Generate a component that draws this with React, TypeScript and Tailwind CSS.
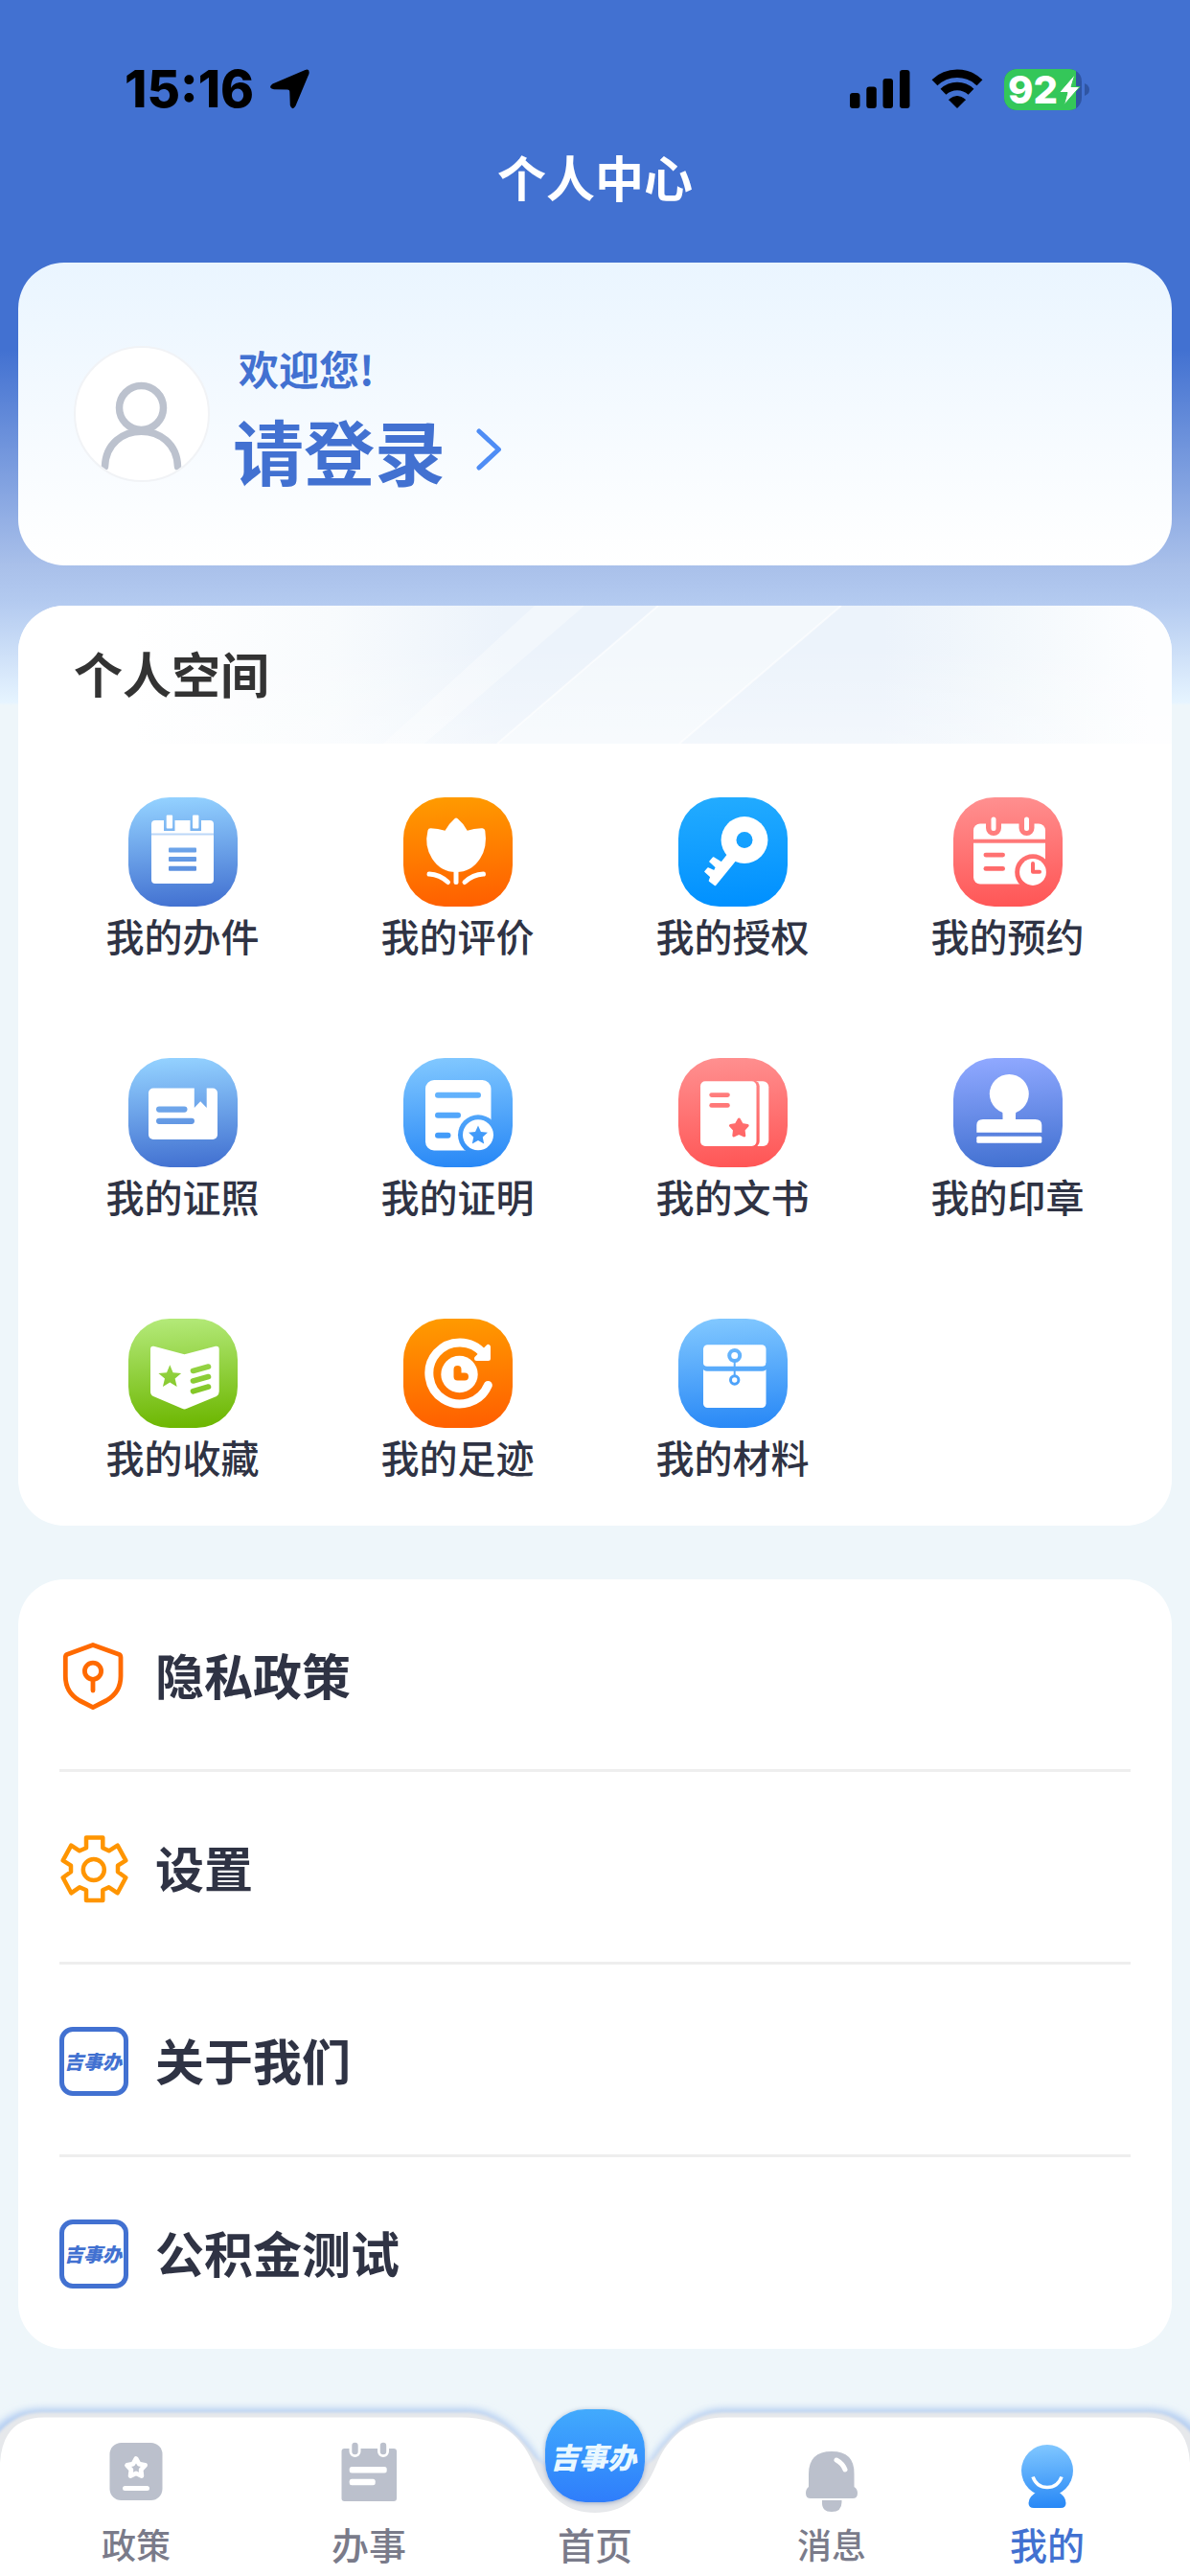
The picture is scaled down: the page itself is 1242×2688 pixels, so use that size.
import type { ReactNode } from "react";

function starPath(cx: number, cy: number, outer: number, inner: number) {
  const points: string[] = [];
  for (let i = 0; i < 10; i++) {
    const r = i % 2 === 0 ? outer : inner;
    const a = -Math.PI / 2 + (i * Math.PI) / 5;
    points.push(`${(cx + r * Math.cos(a)).toFixed(2)} ${(cy + r * Math.sin(a)).toFixed(2)}`);
  }
  return `M${points.join("L")}Z`;
}

type Service = {
  id: string;
  label: string;
  from: string;
  to: string;
  draw: (bg: string) => ReactNode;
};

const services: Service[] = [
  {
    id: "cases",
    label: "我的办件",
    from: "#93d1ff",
    to: "#4271d1",
    draw: (bg) => (
      <>
        <rect x="24" y="24" width="65" height="66" rx="4" fill="#fff" />
        <rect x="24" y="37.5" width="65" height="2" fill="#bcd7f8" />
        <rect x="37" y="22" width="11.5" height="13" fill={bg} />
        <rect x="64.5" y="22" width="11.5" height="13" fill={bg} />
        <rect x="39.7" y="18.5" width="6.4" height="14" rx="1" fill="#fff" />
        <rect x="67" y="18.5" width="6.4" height="14" rx="1" fill="#fff" />
        <rect x="42" y="52.5" width="29" height="5" rx="1" fill={bg} />
        <rect x="42" y="62" width="29" height="5" rx="1" fill={bg} />
        <rect x="42" y="71.7" width="29" height="5" rx="1" fill={bg} />
      </>
    ),
  },
  {
    id: "reviews",
    label: "我的评价",
    from: "#ff9a00",
    to: "#ff5f00",
    draw: () => (
      <>
        <path
          d="M53.5 22.3Q55 20.8 56.7 22.3Q63 27.5 66.7 34.8Q74 32 82.5 32.2Q84.8 32.3 85.3 34.8Q88 52 80 64Q71 78 55 78Q39 78 30 64Q21.500 51 25.500 34.500Q26 32.200 28.500 32.200Q36 32.200 43.500 34.800Q47.500 27.500 53.500 22.300Z"
          fill="#fff"
        />
        <path d="M55 76V88.500" stroke="#fff" strokeWidth="5" strokeLinecap="round" />
        <path d="M27 80Q38 80.500 46.500 88.500M83.500 80Q72.500 80.500 64 88.500" fill="none" stroke="#fff" strokeWidth="5" strokeLinecap="round" />
      </>
    ),
  },
  {
    id: "authorizations",
    label: "我的授权",
    from: "#22abff",
    to: "#0090ff",
    draw: (bg) => (
      <>
        <circle cx="69" cy="44.500" r="24.400" fill="#fff" />
        <circle cx="69" cy="44.500" r="8.500" fill={bg} />
        <path
          d="M51.500 60L45 68.200L36.500 63L33 67L39.500 73L37.500 77L31 74L28 77.500L34 83L32.500 87L38.500 91.500L60 65Z"
          fill="#fff"
          stroke="#fff"
          strokeWidth="1.600"
          strokeLinejoin="round"
        />
      </>
    ),
  },
  {
    id: "bookings",
    label: "我的预约",
    from: "#ff8f8f",
    to: "#ff5656",
    draw: (bg) => (
      <>
        <rect x="21" y="27.500" width="75" height="63" rx="7" fill="#fff" />
        <path d="M42 24V32M76.500 24V32" stroke={bg} strokeWidth="16" strokeLinecap="round" />
        <path d="M42 23V32.500M76.500 23V32.500" stroke="#fff" strokeWidth="5" strokeLinecap="round" />
        <rect x="20" y="43.700" width="77" height="4" fill={bg} />
        <rect x="31.500" y="57.700" width="22.500" height="4.800" rx="2.400" fill={bg} />
        <rect x="31.500" y="72" width="22.500" height="4.800" rx="2.400" fill={bg} />
        <circle cx="83" cy="78" r="18.800" fill={bg} />
        <circle cx="83" cy="78" r="13.900" fill="#fff" />
        <path d="M83 69V77.700H90" fill="none" stroke={bg} strokeWidth="4" strokeLinecap="round" strokeLinejoin="round" />
      </>
    ),
  },
  {
    id: "licences",
    label: "我的证照",
    from: "#93d1ff",
    to: "#4271d1",
    draw: (bg) => (
      <>
        <rect x="21" y="31.500" width="72" height="53.500" rx="5" fill="#fff" />
        <path d="M68.800 31H81.700V52L75.200 45.200L68.800 52Z" fill={bg} />
        <rect x="29" y="50.500" width="32.500" height="6.200" rx="3.100" fill={bg} />
        <rect x="29" y="62.700" width="40" height="6.200" rx="3.100" fill={bg} />
      </>
    ),
  },
  {
    id: "certificates",
    label: "我的证明",
    from: "#80c7ff",
    to: "#2888f6",
    draw: (bg) => (
      <>
        <rect x="23" y="23" width="68.500" height="73.500" rx="9" fill="#fff" />
        <rect x="33" y="35.700" width="48" height="6" rx="3" fill={bg} />
        <rect x="33" y="56.700" width="27" height="6" rx="3" fill={bg} />
        <rect x="33" y="77.700" width="16.500" height="6" rx="3" fill={bg} />
        <circle cx="78" cy="80.300" r="21" fill={bg} />
        <circle cx="78" cy="80.300" r="16" fill="#fff" />
        <path d={starPath(78, 81, 10.5, 5)} fill={bg} />
      </>
    ),
  },
  {
    id: "documents",
    label: "我的文书",
    from: "#ff8f8f",
    to: "#ff5656",
    draw: (bg) => (
      <>
        <rect x="60" y="24.300" width="34.300" height="67.700" rx="6" fill="#fff" />
        <rect x="30" y="23.500" width="54.700" height="69.500" rx="6" fill={bg} />
        <rect x="23" y="24.300" width="58.500" height="67.700" rx="5" fill="#fff" />
        <rect x="32.300" y="36.200" width="21.500" height="4.800" rx="2.400" fill={bg} />
        <rect x="32.300" y="47" width="21.500" height="4.800" rx="2.400" fill={bg} />
        <path d={starPath(63.3, 73.4, 9.3, 5)} fill={bg} stroke={bg} strokeWidth="3" strokeLinejoin="round" />
      </>
    ),
  },
  {
    id: "seals",
    label: "我的印章",
    from: "#8fa8ff",
    to: "#4271d1",
    draw: () => (
      <>
        <circle cx="58.300" cy="37.500" r="20.500" fill="#fff" />
        <path d="M50 54Q51.500 56 51.500 60V64.300H65V60Q65 56 67 54Z" fill="#fff" />
        <path d="M24.300 77.700V70Q24.300 64 31 64H85.500Q92.300 64 92.300 70V77.700Z" fill="#fff" />
        <rect x="24.300" y="81.700" width="68" height="7" rx="1.500" fill="#fff" />
      </>
    ),
  },
  {
    id: "favorites",
    label: "我的收藏",
    from: "#b3e978",
    to: "#6cb600",
    draw: (bg) => (
      <>
        <path
          d="M26.500 28.800L58.500 37.300L91 28.800Q94.700 28.300 94.700 32V76Q94.700 79.500 92 81L61 93.800Q58.500 95 56 93.800L26 81Q23 79.500 23 76V32Q23 28.300 26.500 28.800Z"
          fill="#fff"
        />
        <path d={starPath(43.3, 60.8, 12.5, 5.6)} fill={bg} />
        <path d="M67.500 54.500L83.500 50M67.500 65L83.500 60.500M67.500 75.800L83.500 71" stroke={bg} strokeWidth="5.600" strokeLinecap="round" />
      </>
    ),
  },
  {
    id: "history",
    label: "我的足迹",
    from: "#ff9a00",
    to: "#ff5f00",
    draw: (bg) => (
      <>
        <path d="M83.500 36.500A32 32 0 1 0 88.300 69.500" fill="none" stroke="#fff" strokeWidth="9" strokeLinecap="round" />
        <path d="M88.500 29.500V41.500H76.500Z" fill="#fff" stroke="#fff" strokeWidth="5" strokeLinejoin="round" />
        <circle cx="58.500" cy="58" r="19.200" fill="#fff" />
        <path d="M56.500 53V60.500H64" fill="none" stroke={bg} strokeWidth="8" strokeLinecap="round" strokeLinejoin="round" />
      </>
    ),
  },
  {
    id: "materials",
    label: "我的材料",
    from: "#80c7ff",
    to: "#2888f6",
    draw: (bg) => (
      <>
        <rect x="26" y="27.300" width="65.500" height="65.700" rx="4.500" fill="#fff" />
        <path d="M26 46Q26 49.800 30 49.800H87.500Q91.500 49.800 91.500 46H93V51Q91.500 54.800 87.500 54.800H30Q26 54.800 25 51V46Z" fill={bg} />
        <circle cx="58.700" cy="38.500" r="5.500" fill="none" stroke={bg} strokeWidth="4" />
        <path d="M58.700 44V60" stroke={bg} strokeWidth="2" />
        <circle cx="58.700" cy="64" r="4.200" fill="none" stroke={bg} strokeWidth="3" />
      </>
    ),
  },
];

function ServiceIcon({ service }: { service: Service }) {
  const id = `tile-${service.id}`;
  return (
    <svg viewBox="0 0 114 114" className="size-[114px]" aria-hidden="true">
      <defs>
        <linearGradient id={id} gradientUnits="userSpaceOnUse" x1="53" y1="0" x2="61" y2="114">
          <stop offset="0" stopColor={service.from} />
          <stop offset="1" stopColor={service.to} />
        </linearGradient>
      </defs>
      <rect width="114" height="114" rx="43" fill={`url(#${id})`} />
      {service.draw(`url(#${id})`)}
    </svg>
  );
}

function ShieldIcon() {
  return (
    <svg viewBox="0 0 72 72" className="size-[72px]" fill="none" stroke="#ff6a00" strokeWidth="4.800" strokeLinecap="round" strokeLinejoin="round" aria-hidden="true">
      <path d="M35 3.500L62 13.200Q64 14 64 16.500V36Q64 53 49 61.500L35 68.700L21 61.500Q6.300 53 6.300 36V16.500Q6.300 14 8.300 13.200Z" />
      <circle cx="35" cy="30.700" r="8.600" />
      <path d="M35 40V51" />
    </svg>
  );
}

function GearIcon() {
  return (
    <svg viewBox="0 0 72 72" className="size-[72px]" fill="none" stroke="#ff9500" strokeWidth="4.500" strokeLinejoin="round" aria-hidden="true">
      <path d="M28 3.500H45.300V14.300L51.700 17.300L60.700 11.700L69.300 27.300L61 32.700V39.300L69.300 45.300L60.700 61.300L51.700 55.300L45.300 58.300V69H28V58.300L21 55.300L12.300 61.300L3.700 45.300L12 39.300V32.700L3.700 27.300L12.300 11.700L21 17.300L28 14.300Z" />
      <circle cx="35.800" cy="37" r="11" />
    </svg>
  );
}

function BrandBadge() {
  return (
    <span className="flex size-[72px] items-center justify-center rounded-[14px] border-[5px] border-[#4271d1] pr-0.5 text-[20px] leading-none font-black text-[#4271d1] italic">
      吉事办
    </span>
  );
}

const menu = [
  { label: "隐私政策", icon: <ShieldIcon /> },
  { label: "设置", icon: <GearIcon /> },
  { label: "关于我们", icon: <BrandBadge /> },
  { label: "公积金测试", icon: <BrandBadge /> },
];

function StatusBar() {
  return (
    <div className="flex items-center justify-between pt-[66px] pr-[104px] pl-[130px]">
      <div className="flex h-[54px] items-center gap-4">
        <span className="font-[Inter] text-[53px] leading-[54px] font-extrabold text-black">15:16</span>
        <svg viewBox="0 0 42 42" className="size-[42px]" aria-hidden="true">
          <path d="M37.500 1Q42.500 -1 41.500 5L27.500 38.500Q24 44 21.800 38L21.300 23.500Q21.300 21.500 19 21.500L5 21.300Q-2 20 3.500 15.500Z" fill="#000" />
        </svg>
      </div>
      <div className="flex h-[54px] items-center gap-[21px]">
        <svg viewBox="0 0 63 42" className="h-[42px] w-[63px]" aria-hidden="true">
          <rect x="0" y="25" width="10.500" height="16" rx="3" />
          <rect x="17.300" y="18.500" width="10.500" height="22.500" rx="3" />
          <rect x="34.500" y="10" width="10.500" height="31" rx="3" />
          <rect x="52" y="1" width="10.500" height="40" rx="3" />
        </svg>
        <svg viewBox="0 0 56 42" className="h-[42px] w-[56px]" aria-hidden="true">
          <path d="M4.500 14.300A34 34 0 0 1 51.500 14.300" fill="none" stroke="#000" strokeWidth="8.500" />
          <path d="M13.500 23.800A21 21 0 0 1 42.500 23.800" fill="none" stroke="#000" strokeWidth="8.500" />
          <path d="M28 40.500L19.500 32Q28 25 36.500 32Z" stroke="#000" strokeLinejoin="round" />
        </svg>
        <svg viewBox="0 0 90 43" className="h-[43px] w-[90px] overflow-visible" role="img" aria-label="电量 92%，充电中">
          <defs>
            <clipPath id="battery-body">
              <rect width="81" height="43" rx="13" />
            </clipPath>
          </defs>
          <g clipPath="url(#battery-body)">
            <rect width="81" height="43" fill="#2f55a3" />
            <rect width="75" height="43" fill="#34c759" />
          </g>
          <path d="M84 15Q89 17 89 21.500T84 28Z" fill="#2f55a3" />
          <text x="4" y="36" fontFamily="Inter" fontSize="40" fontWeight="800" fill="#fff">
            92
          </text>
          <path d="M74 5.500L57.500 24.500H66L62.500 37.500L79 18.500H70Z" fill="#fff" stroke="#34c759" strokeWidth="1" />
        </svg>
      </div>
    </div>
  );
}

function ProfileCard() {
  return (
    <section className="flex h-[316px] items-start rounded-[48px] bg-linear-to-b from-[#eaf5ff] to-white pt-[83px] pl-[58px]">
      <span className="mt-1 flex size-[142px] shrink-0 items-center justify-center overflow-hidden rounded-full border-2 border-[#f1f3f6] bg-white">
        <svg viewBox="0 0 138 138" className="size-[138px]" fill="none" stroke="#bcc2ce" strokeWidth="7.500" strokeLinecap="round" aria-hidden="true">
          <circle cx="68.500" cy="62.500" r="23" />
          <path d="M30.500 124C32 75 105 75 106.500 124" />
        </svg>
      </span>
      <div className="ml-6 flex flex-col text-[#4271d1]">
        <p className="ml-1.5 text-[42px] leading-[54px] font-bold">欢迎您!</p>
        <a href="#login" className="mt-2 flex items-center gap-8">
          <span className="text-[74px] leading-[100px] font-bold">请登录</span>
          <svg viewBox="0 0 28 46" className="h-[46px] w-[28px]" fill="none" stroke="#4f8df5" strokeWidth="5" strokeLinecap="round" strokeLinejoin="round" aria-hidden="true">
            <path d="M3 4L23.500 23L3 42" />
          </svg>
        </a>
      </div>
    </section>
  );
}

function SpaceBanner() {
  return (
    <svg viewBox="0 0 1204 144" preserveAspectRatio="none" className="absolute inset-0 h-full w-full" aria-hidden="true">
      <defs>
        <linearGradient id="banner-base" x1="0" y1="0" x2="1" y2="0">
          <stop offset="0.100" stopColor="#ffffff" />
          <stop offset="0.270" stopColor="#f8fbfd" />
          <stop offset="0.420" stopColor="#ecf3fb" />
          <stop offset="0.750" stopColor="#ecf3fb" />
          <stop offset="0.860" stopColor="#f3f8fc" />
          <stop offset="0.980" stopColor="#fdfeff" />
        </linearGradient>
        <linearGradient id="banner-fade" x1="0" y1="0" x2="0" y2="1">
          <stop offset="0.300" stopColor="#ffffff" stopOpacity="0" />
          <stop offset="1" stopColor="#ffffff" stopOpacity="0.350" />
        </linearGradient>
      </defs>
      <rect width="1204" height="144" fill="url(#banner-base)" />
      <path d="M539 0H591L424 144H381Z" fill="#fff" fillOpacity="0.350" />
      <path d="M668 0H859L690 144H500Z" fill="#fff" fillOpacity="0.400" />
      <path d="M668 0L500 144M859 0L690 144" stroke="#fff" strokeOpacity="0.600" strokeWidth="2" />
      <rect width="1204" height="144" fill="url(#banner-fade)" />
    </svg>
  );
}

function PersonalSpace() {
  return (
    <section className="mt-[42px] overflow-hidden rounded-[48px] bg-white pb-11">
      <div className="relative h-[144px]">
        <SpaceBanner />
        <h2 className="relative pt-[34px] pl-[58px] text-[51px] leading-[72px] font-bold text-[#333333]">个人空间</h2>
      </div>
      <ul className="grid grid-cols-4 gap-y-[100px] px-7 pt-14">
        {services.map((service) => (
          <li key={service.id}>
            <a href={`#${service.id}`} className="flex flex-col items-center gap-0.5">
              <ServiceIcon service={service} />
              <span className="text-[40px] leading-[56px] font-medium text-[#2f3344]">{service.label}</span>
            </a>
          </li>
        ))}
      </ul>
    </section>
  );
}

function MenuList() {
  return (
    <ul className="mt-14 rounded-[48px] bg-white px-[43px] pb-0.5">
      {menu.map((item) => (
        <li key={item.label} className="border-b-3 border-[#eeeeee] last:border-b-0">
          <a href={`#${item.label}`} className="flex h-[198px] items-center gap-7 pt-1">
            {item.icon}
            <span className="pb-1 text-[51px] leading-[72px] font-bold text-[#2f3344]">{item.label}</span>
          </a>
        </li>
      ))}
    </ul>
  );
}

function PolicyTabIcon() {
  return (
    <svg viewBox="0 0 72 76" className="h-[76px] w-[72px]" aria-hidden="true">
      <rect x="8.500" y="2" width="55" height="60" rx="12" fill="#bbc0cc" />
      <path d={starPath(36, 28.500, 10, 5.4)} fill="none" stroke="#fff" strokeWidth="4.800" strokeLinejoin="round" />
      <rect x="22" y="47" width="28" height="5" rx="2.500" fill="#fff" />
    </svg>
  );
}

function WorkTabIcon() {
  return (
    <svg viewBox="0 0 72 76" className="h-[76px] w-[72px]" aria-hidden="true">
      <rect x="7.500" y="8" width="57.500" height="55" rx="3" fill="#bbc0cc" />
      <path d="M21.500 4V11M51 4V11" stroke="#fff" strokeWidth="12" strokeLinecap="round" />
      <path d="M21.500 5V11M51 5V11" stroke="#bbc0cc" strokeWidth="6.400" strokeLinecap="round" />
      <rect x="15.700" y="27" width="39" height="6.500" rx="2.500" fill="#fff" />
      <rect x="15.700" y="39.700" width="27" height="6.500" rx="2.500" fill="#fff" />
    </svg>
  );
}

function MessageTabIcon() {
  return (
    <svg viewBox="0 0 72 76" className="h-[76px] w-[72px]" fill="#bbc0cc" aria-hidden="true">
      <path d="M12 48V34.500Q12 11 36 11T59.500 34.500V48Q63 50 63 54.500Q63 60 58 60H14Q9 60 9 54.500Q9 50 12 48Z" />
      <path d="M26 62H46.500V64Q46.500 74 36 74T26 64Z" />
      <path d="M41 20Q47.500 23.500 50 30" fill="none" stroke="#fff" strokeWidth="5" strokeLinecap="round" />
    </svg>
  );
}

function MineTabIcon() {
  return (
    <svg viewBox="0 0 72 76" className="h-[76px] w-[72px]" aria-hidden="true">
      <defs>
        <linearGradient id="mine-fill" gradientUnits="userSpaceOnUse" x1="34" y1="4" x2="38" y2="70">
          <stop offset="0" stopColor="#80c7ff" />
          <stop offset="1" stopColor="#2888f6" />
        </linearGradient>
      </defs>
      <circle cx="36" cy="31" r="27" fill="url(#mine-fill)" />
      <path d="M26 53H47Q55.500 57.500 55.500 65Q55.500 70 50 70H22Q16.500 70 16.500 65Q16.500 57.500 26 53Z" fill="url(#mine-fill)" />
      <path d="M21 37.500Q25 48.500 36 48.500T51 37.500" fill="none" stroke="#fff" strokeWidth="3.600" />
    </svg>
  );
}

function TabBarShape() {
  return (
    <svg viewBox="0 0 1242 188" preserveAspectRatio="none" className="absolute bottom-0 left-0 h-[188px] w-full overflow-visible" aria-hidden="true">
      <defs>
        <filter id="bar-glow" x="-5%" y="-20%" width="110%" height="140%">
          <feGaussianBlur stdDeviation="4" />
        </filter>
        <filter id="bar-rim" x="-5%" y="-20%" width="110%" height="140%">
          <feGaussianBlur stdDeviation="1.500" />
        </filter>
      </defs>
      <path
        d="M-20 200V60Q-2 14 44 14H486C520 14 545 40 562 66L590 110H652L680 66C697 40 722 14 756 14H1198Q1244 14 1262 60V200Z"
        fill="#a9c6f0"
        filter="url(#bar-glow)"
      />
      <path
        d="M-20 200V70Q2 17 44 17H486C520 17 543 42 560 66L580 80H662L682 66C699 42 722 17 756 17H1198Q1240 17 1262 70V200Z"
        fill="#e6e8eb"
        filter="url(#bar-rim)"
      />
      <path
        d="M0 188V70Q3 22.500 46 22.500H482C522 22.500 545 42 557 72C572 108 594 122 621 122C648 122 670 108 685 72C697 42 720 22.500 758 22.500H1196Q1239 22.500 1242 70V188Z"
        fill="#fff"
      />
    </svg>
  );
}

function TabBar() {
  return (
    <nav className="relative mt-auto h-[174px]" aria-label="主导航">
      <TabBarShape />
      <div className="relative grid h-full grid-cols-[284fr_202fr_270fr_224fr_226fr_36fr] items-end pb-3 text-[#7a7b8a]">
        <a href="#policy" className="flex flex-col items-center gap-[9px]">
          <PolicyTabIcon />
          <span className="text-[36px] leading-[44px] font-medium">政策</span>
        </a>
        <a href="#work" className="flex flex-col items-center gap-[9px]">
          <WorkTabIcon />
          <span className="text-[39px] leading-[44px] font-medium">办事</span>
        </a>
        <a href="#home" className="flex flex-col items-center gap-[21px]">
          <span className="flex h-[97px] w-[104px] items-center justify-center rounded-[42px] bg-linear-to-b from-[#42aafd] to-[#2f7dfb] pr-1 text-[30px] leading-none font-black text-[#eaf8ff] italic shadow-[0_1px_5px_rgba(60,90,150,0.45)]">
            吉事办
          </span>
          <span className="text-[39px] leading-[44px] font-medium">首页</span>
        </a>
        <a href="#messages" className="flex flex-col items-center gap-[9px]">
          <MessageTabIcon />
          <span className="text-[36px] leading-[44px] font-medium">消息</span>
        </a>
        <a href="#mine" aria-current="page" className="flex flex-col items-center gap-[9px] text-[#4271d1]">
          <MineTabIcon />
          <span className="text-[39px] leading-[44px] font-medium">我的</span>
        </a>
      </div>
    </nav>
  );
}

export default function App() {
  return (
    <div className="flex min-h-screen flex-col overflow-hidden bg-[#eef6fa] bg-[linear-gradient(to_bottom,#4271d1_0px,#4271d1_365px,#a9c0ea_590px,#b3caf0_628px,#e6f4ff_733px,#eef6fa_736px)] font-['Noto_Sans_CJK_SC',sans-serif]">
      <header>
        <StatusBar />
        <h1 className="mt-7 text-center text-[51px] leading-[72px] font-bold text-white">个人中心</h1>
      </header>
      <main className="mt-[54px] px-[19px]">
        <ProfileCard />
        <PersonalSpace />
        <MenuList />
      </main>
      <TabBar />
    </div>
  );
}
